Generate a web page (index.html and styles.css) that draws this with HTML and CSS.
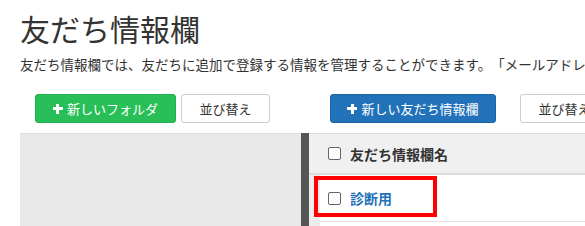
FILE: index.html
```html
<!DOCTYPE html>
<html lang="ja">
<head>
    <meta charset="UTF-8">
    <title>友だち情報欄</title>
    <link rel="stylesheet" href="styles.css">
</head>
<body>
    <h1 class="page-title">友だち情報欄</h1>
    <p class="lead">友だち情報欄では、友だちに追加で登録する情報を管理することができます。「メールアドレス」など</p>

    <div class="columns">
        <div class="toolbar toolbar-folders">
            <button class="btn btn-green btn-folder"><span class="plus"></span>新しいフォルダ</button>
            <button class="btn btn-plain btn-sort">並び替え</button>
        </div>
        <div class="toolbar toolbar-fields">
            <button class="btn btn-blue btn-field"><span class="plus"></span>新しい友だち情報欄</button>
            <button class="btn btn-plain btn-sort2">並び替え</button>
        </div>

        <div class="folder-panel"></div>
        <div class="divider"></div>
        <div class="field-panel">
            <div class="field-list">
                <div class="list-head">
                    <span class="check"></span>
                    <span class="head-label">友だち情報欄名</span>
                </div>
                <div class="list-row">
                    <span class="check"></span>
                    <a class="field-name" href="#">診断用</a>
                    <div class="highlight"></div>
                </div>
            </div>
        </div>
    </div>
</body>
</html>
```

FILE: styles.css
```css
html {
    overflow: hidden;
}

body {
    margin: 0;
    padding: 0 0 0 20px;
    font-family: "Noto Sans CJK JP", "Noto Sans", sans-serif;
    color: #333333;
    background: #ffffff;
    width: 640px;
    text-spacing-trim: space-all;
}

.page-title {
    margin: 0;
    padding-top: 10px;
    font-size: 30px;
    line-height: 36px;
    font-weight: 400;
    color: #333333;
}

.lead {
    margin: 8px 0 0 0;
    font-size: 13.5px;
    line-height: 20px;
    white-space: nowrap;
    color: #333333;
}

.columns {
    display: grid;
    grid-template-columns: 281px 8px 1fr;
    grid-template-rows: 59px 93px;
}

.toolbar {
    display: flex;
    align-items: flex-start;
    padding-top: 20px;
}

.toolbar-folders {
    grid-column: 1;
    padding-left: 15px;
}

.toolbar-fields {
    grid-column: 2 / 4;
    padding-left: 29px;
}

.btn {
    height: 29px;
    border-radius: 3px;
    font-family: inherit;
    font-size: 13px;
    display: flex;
    align-items: center;
    justify-content: center;
    padding: 0;
    cursor: pointer;
}

.btn-green {
    background: #29bf58;
    border: 1px solid #22b04f;
    color: #ffffff;
}

.btn-blue {
    background: #2172b8;
    border: 1px solid #1c66a6;
    color: #ffffff;
}

.btn-plain {
    background: #ffffff;
    border: 1px solid #cccccc;
    color: #333333;
}

.btn-folder { width: 141px; }
.btn-sort { width: 89px; margin-left: 5px; }
.btn-field { width: 166px; }
.btn-sort2 { width: 89px; margin-left: 24px; }

.plus {
    position: relative;
    width: 10px;
    height: 10px;
    margin-right: 4px;
}

.plus::before,
.plus::after {
    content: "";
    position: absolute;
    background: #ffffff;
}

.plus::before {
    left: 0;
    top: 3.5px;
    width: 10px;
    height: 3px;
}

.plus::after {
    left: 3.5px;
    top: 0;
    width: 3px;
    height: 10px;
}

.folder-panel {
    background: #e9e9e9;
    border-top: 1px solid #dddddd;
}

.divider {
    background: #555555;
}

.field-panel {
    background: #ececec;
    border-top: 1px solid #dddddd;
    padding-left: 11px;
}

.field-list {
    background: #ffffff;
    height: 100%;
}

.list-head {
    display: flex;
    align-items: center;
    height: 39px;
    background: #f0f0f0;
    border-bottom: 2px solid #dddddd;
    margin-left: -11px;
    padding-left: 19px;
}

.head-label {
    font-size: 14px;
    font-weight: 700;
    color: #333333;
}

.list-row {
    position: relative;
    display: flex;
    align-items: center;
    height: 46px;
    padding-left: 8px;
    border-bottom: 1px solid #e3e3e3;
}

.check {
    width: 11px;
    height: 11px;
    border: 1px solid #666666;
    border-radius: 2px;
    background: #ffffff;
    margin-right: 9px;
    flex-shrink: 0;
}

.field-name {
    font-size: 14px;
    font-weight: 700;
    color: #1f72b8;
    text-decoration: none;
}

.highlight {
    position: absolute;
    left: -6px;
    top: 1px;
    width: 115px;
    height: 33px;
    border: 4px solid #ff0000;
}
```
